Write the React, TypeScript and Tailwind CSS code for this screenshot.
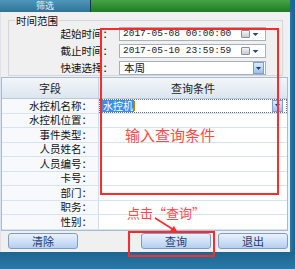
import React from 'react';

const cjk = { fontFamily: '"Noto Sans CJK SC", "Noto Sans", sans-serif' };

const fields = ['水控机名称：', '水控机位置：', '事件类型：', '人员姓名：', '人员编号：', '卡号：', '部门：', '职务：', '性别：'];

function DateInput({ value }: { value: string }) {
  return (
    <div className="w-[147px] h-[14px] bg-white border border-[#a7b0bb] flex items-center pl-[3px] pr-[2px]">
      <span className="flex-1 text-[9.5px] leading-none text-[#222]" style={{ fontFamily: '"Liberation Mono", monospace' }}>
        {value}
      </span>
      <span className="w-[9px] h-[8px] border border-[#8a8f96] bg-gradient-to-b from-[#f4f4f4] to-[#c9cbce] rounded-[1px]" />
      <svg width="7" height="5" viewBox="0 0 7 5" className="ml-[2px] mr-[4px]">
        <path d="M0.5 1 L6.5 1 L3.5 4 Z" fill="#2b4c7a" />
      </svg>
    </div>
  );
}

function DropBtn() {
  return (
    <span className="w-[11px] h-[12px] bg-gradient-to-b from-[#dce9fa] to-[#9fc0ea] border border-[#7e9fcb] flex items-center justify-center">
      <svg width="5" height="3" viewBox="0 0 5 3">
        <path d="M0 0 L5 0 L2.5 3 Z" fill="#1d3f70" />
      </svg>
    </span>
  );
}

function Btn({ label, className }: { label: string; className: string }) {
  return (
    <button
      className={`h-[16px] rounded-[3px] border border-[#7f9dc4] bg-gradient-to-b from-[#eaf2fc] to-[#b5cff0] text-[11px] leading-none text-[#1e3c72] flex items-center justify-center ${className}`}
      style={cjk}
    >
      {label}
    </button>
  );
}

export default function App() {
  return (
    <div className="relative w-[295px] h-[269px] flex flex-col bg-[#1f6892] overflow-hidden" style={cjk}>
      {/* title strip */}
      <div className="h-[12px] flex">
        <div className="w-[90px] bg-gradient-to-b from-[#4f96bb] to-[#2f7398] text-[9px] leading-[10px] text-[#e6f2f8] flex items-center justify-center">筛选</div>
        <div className="w-px bg-[#12384d]" />
        <div className="flex-1 bg-gradient-to-b from-[#45a445] to-[#1f7a22]" />
        <div className="w-[5px] bg-[#1f6892]" />
      </div>

      <div className="flex h-[240px]">
        <div className="w-[290px] bg-[#f0f0f0] border-l border-[#dfe3e8] flex flex-col">
          {/* time range */}
          <fieldset className="mx-[7px] mt-[2px] h-[62px] border border-[#d3d6da] px-0 pb-0">
            <legend className="ml-[6px] px-[1px] text-[10.5px] leading-[13px] text-[#111]">时间范围</legend>
            <div className="flex flex-col gap-[3px]">
              <div className="flex items-center">
                <span className="w-[110px] text-right pr-[6px] text-[10.5px] leading-none text-[#111]">起始时间：</span>
                <DateInput value="2017-05-08 00:00:00" />
              </div>
              <div className="flex items-center">
                <span className="w-[110px] text-right pr-[6px] text-[10.5px] leading-none text-[#111]">截止时间：</span>
                <DateInput value="2017-05-10 23:59:59" />
              </div>
              <div className="flex items-center">
                <span className="w-[110px] text-right pr-[6px] text-[10.5px] leading-none text-[#111]">快速选择：</span>
                <div className="w-[147px] h-[14px] bg-white border border-[#a7b0bb] flex items-center pl-[4px] pr-[1px]">
                  <span className="flex-1 text-[10.5px] leading-none text-[#111]">本周</span>
                  <DropBtn />
                </div>
              </div>
            </div>
          </fieldset>

          {/* query table */}
          <div className="mt-[1px] ml-0 w-[287px] h-[154px] border border-[#a9bbd0] bg-white flex flex-col">
            <div className="h-[21px] flex bg-gradient-to-b from-[#f3f6fa] to-[#dce5f0] border-b border-[#b9c9dc] text-[11px] text-[#222]">
              <div className="w-[97px] border-r border-[#c3d1e2] flex items-center justify-center">字段</div>
              <div className="flex-1 flex items-center justify-center">查询条件</div>
            </div>
            {fields.map((f, i) => (
              <div key={f} className="h-[14.6px] flex border-b border-[#d6e3f2]">
                <div className="w-[97px] border-r border-[#d0dcec] bg-[#f7f9fc] flex items-center justify-end pr-[6px] text-[10.5px] leading-none text-[#111]">
                  {f}
                </div>
                <div className="flex-1 flex items-center">
                  {i === 0 && (
                    <div className="w-full h-full border border-dotted border-[#6b7480] flex items-center pl-[2px] pr-[3px]">
                      <span className="bg-[#3a8ee6] text-white text-[10px] leading-[12px] px-[1px]">水控机</span>
                      <span className="w-px h-[10px] bg-[#d08000]" />
                      <span className="flex-1" />
                      <DropBtn />
                    </div>
                  )}
                </div>
              </div>
            ))}
          </div>

          {/* buttons */}
          <div className="flex items-center mt-[2px] pl-[7px]">
            <Btn label="清除" className="w-[70px]" />
            <Btn label="查询" className="w-[70px] ml-[63px]" />
            <Btn label="退出" className="w-[70px] ml-[7px]" />
          </div>
        </div>
        <div className="flex-1 bg-gradient-to-r from-[#2a78a6] to-[#1c6088]" />
      </div>

      <div className="flex-1 bg-gradient-to-b from-[#1c6590] to-[#2a79a8]" />

      {/* annotations */}
      <div className="absolute left-[100px] top-[28px] w-[179px] h-[167px] border-2 border-[#ff2a2a]" />
      <div className="absolute left-[125px] top-[126px] text-[15px] leading-[17px] text-[#ff4a4a]">输入查询条件</div>
      <div className="absolute left-[127px] top-[205px] text-[13px] leading-[15px] text-[#ff4a4a]">点击“查询”</div>
      <svg className="absolute left-0 top-0" width="295" height="269" viewBox="0 0 295 269">
        <line x1="155" y1="218" x2="174" y2="230" stroke="#ff2a2a" strokeWidth="1.6" />
        <path d="M178 233 L170 231 L174 226 Z" fill="#ff2a2a" />
      </svg>
      <div className="absolute left-[128px] top-[231px] w-[87px] h-[26px] border-2 border-[#ff2a2a]" />
    </div>
  );
}
